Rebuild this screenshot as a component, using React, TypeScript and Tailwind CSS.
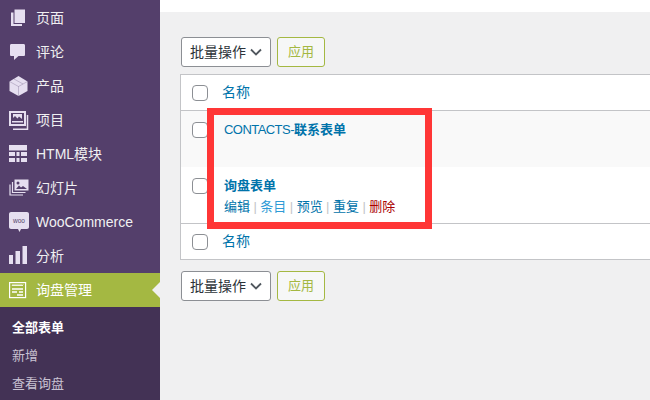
import type { ReactNode } from 'react';

const iconFill = '#e6dff0';
const sidebar = '#543f6b';

// menu icons, drawn after the wp dashicons
const PageIcon = () => (
    <svg width="20" height="20" viewBox="0 0 20 20" fill={iconFill}>
        <path d="M5.500 1.500h10.500v13.500H5.500z" />
        <path d="M2 4.500h2.500v11.500H13v2H2z" />
    </svg>
);
const CommentIcon = () => (
    <svg width="20" height="20" viewBox="0 0 20 20" fill={iconFill}>
        <path d="M2.500 2h12c1 0 1.500.6 1.500 1.500v9c0 1-.5 1.500-1.500 1.500H9.500L5 18v-4H2.500C1.500 14 1 13.500 1 12.500v-9C1 2.600 1.500 2 2.500 2z" />
    </svg>
);
const BoxIcon = () => (
    <svg width="20" height="20" viewBox="0 0 20 20" fill={iconFill}>
        <path d="M9.500 0l9 5.500v9.500l-9 5-9-5V5.500z" />
        <path d="M.5 5.500l9 5 9-5M9.500 10.500V20M5 3l9 5" fill="none" stroke={sidebar} strokeWidth=".6" strokeOpacity=".45" />
    </svg>
);
const PortfolioIcon = () => (
    <svg width="20" height="20" viewBox="0 0 20 20" fill="none" stroke={iconFill}>
        <rect x="1" y="2" width="15" height="13" strokeWidth="2" />
        <path d="M18.500 5v14.200H4" strokeWidth="1.500" />
        <path d="M4 4h9v5L10 6.500 8.500 8.500 6 6 4 8z" fill={iconFill} stroke="none" />
        <path d="M3 11h11v1.500H3z" fill={iconFill} stroke="none" />
    </svg>
);
const GridIcon = () => (
    <svg width="20" height="20" viewBox="0 0 20 20" fill={iconFill}>
        <path d="M0 1h18v5.500H0z" />
        <path d="M0 8h6v4H0zM7.500 8h3v4h-3zM12 8h6v4h-6zM0 14h6v4H0zM7.500 14h3v4h-3zM12 14h6v4h-6z" />
    </svg>
);
const SlidesIcon = () => (
    <svg width="20" height="20" viewBox="0 0 20 20" fill="none" stroke={iconFill} strokeWidth="1.200">
        <rect x="5.500" y="1.500" width="14" height="11" fill={iconFill} stroke="none" />
        <path d="M3.500 4v10.500h13M1 6.500v10.500h13" />
        <path d="M7 11l3-3.500 2 2 2-1.500 4 3z" fill={sidebar} stroke="none" />
        <circle cx="9" cy="5" r="1.500" fill={sidebar} stroke="none" />
    </svg>
);
const WooIcon = () => (
    <svg width="20" height="20" viewBox="0 0 20 20">
        <path d="M2 0h16c1 0 2 .8 2 2v13c0 1-1 2-2 2h-6l-1.500 3-1.500-3H2c-1 0-2-1-2-2V2C0 .8 1 0 2 0z" fill={iconFill} />
        <text x="10" y="10.500" textAnchor="middle" fontSize="6.500" fontFamily="'Liberation Sans', sans-serif" fill={sidebar}>woo</text>
    </svg>
);
const ChartIcon = () => (
    <svg width="20" height="20" viewBox="0 0 20 20" fill={iconFill}>
        <path d="M0 9h4v9H0zM6.500 5h4.500v13H6.500zM13.500 0H18v18h-4.500z" />
    </svg>
);
const FormIcon = () => (
    <svg width="20" height="20" viewBox="0 0 20 20" fill="none" stroke="#fff">
        <rect x=".6" y="2.600" width="16" height="15" strokeWidth="1.200" />
        <path d="M3 6l1-1.500L5 6l1-1.500L7 6l1-1.500L9 6l1-1.500L11 6l1-1.500L13 6l1-1.500" strokeWidth="1" />
        <path d="M3 9h11M3 12h5M10 12h4M8 15h6" strokeWidth="1.300" />
    </svg>
);

const menu: { label: string; icon: ReactNode }[] = [
    { label: '页面', icon: <PageIcon /> },
    { label: '评论', icon: <CommentIcon /> },
    { label: '产品', icon: <BoxIcon /> },
    { label: '项目', icon: <PortfolioIcon /> },
    { label: 'HTML模块', icon: <GridIcon /> },
    { label: '幻灯片', icon: <SlidesIcon /> },
    { label: 'WooCommerce', icon: <WooIcon /> },
    { label: '分析', icon: <ChartIcon /> },
];

function BulkBar() {
    return (
        <div className="flex items-center gap-[6px] pl-px">
            <div className="flex h-[30px] w-[90px] items-center justify-between rounded-[3px] border border-[#8c8f94] bg-white pl-2 pr-[8px] text-[14px] text-[#2c3338]">
                <span>批量操作</span>
                <svg width="12" height="8" viewBox="0 0 12 8" fill="none" stroke="#50575e" strokeWidth="1.800">
                    <path d="M1 1.500l5 5 5-5" />
                </svg>
            </div>
            <div className="flex h-[30px] w-[48px] items-center justify-center rounded-[3px] border border-[#a4b842] bg-[#f6f7f7] text-[13px] text-[#a4b842]">
                应用
            </div>
        </div>
    );
}

function Check() {
    return <div className="h-4 w-4 shrink-0 rounded-[4px] border border-[#8c8f94] bg-white" />;
}

function Sep() {
    return <span className="w-[10.300px] text-center text-[#c3c4c7]">|</span>;
}

export default function App() {
    return (
        <div className="flex h-[400px] w-[650px] overflow-hidden font-['Liberation_Sans','Noto_Sans_CJK_SC',sans-serif] text-[13px]">
            {/* Sidebar */}
            <div className="flex w-[160px] shrink-0 flex-col bg-[#543f6b] pt-px">
                {menu.map((m) => (
                    <div key={m.label} className="flex h-[34px] items-center text-[#f0f0f1]">
                        <div className="w-[36px] pl-[9px]">{m.icon}</div>
                        <span className="text-[14px]">{m.label}</span>
                    </div>
                ))}
                <div className="relative flex h-[34px] items-center bg-[#a4b842] text-white">
                    <div className="w-[36px] pl-[9px]"><FormIcon /></div>
                    <span className="text-[14px]">询盘管理</span>
                    <div className="absolute right-0 top-[9px] h-0 w-0 border-y-[8px] border-r-[8px] border-y-transparent border-r-[#f0f0f1]" />
                </div>
                <div className="flex flex-1 flex-col bg-[#433255] pl-3 pt-[7px] text-[#c9c2d2]">
                    <div className="flex h-[28px] items-center font-bold text-white">全部表单</div>
                    <div className="flex h-[28px] items-center">新增</div>
                    <div className="flex h-[28px] items-center">查看询盘</div>
                </div>
            </div>

            {/* Content */}
            <div className="relative flex flex-1 flex-col bg-[#f0f0f1]">
                <div className="h-3 bg-white" />
                <div className="flex flex-col pl-5 pt-[25px]">
                    <BulkBar />
                    <div className="mt-[7px] border-y border-l border-[#c3c4c7] bg-white">
                        <div className="flex h-[36px] items-center gap-[14px] border-b border-[#c3c4c7] pl-[11px] text-[14px] text-[#0073aa]">
                            <Check />
                            <span>名称</span>
                        </div>
                        <div className="flex h-[56px] items-start gap-[14px] bg-[#f9f9f9] pl-[11px] pt-[11px]">
                            <Check />
                            <span className="-mt-[2px] ml-[2px] text-[#0073aa]">
                                <span className="tracking-[-0.55px]">CONTACTS-</span>
                                <span className="font-semibold">联系表单</span>
                            </span>
                        </div>
                        <div className="flex h-[57px] items-start gap-[14px] border-b border-[#c3c4c7] pl-[11px] pt-[11px]">
                            <Check />
                            <div className="-mt-[2px] ml-[2px] flex flex-col">
                                <span className="font-semibold text-[#0073aa]">询盘表单</span>
                                <div className="mt-[1px] flex items-center text-[#0073aa]">
                                    <span>编辑</span>
                                    <Sep />
                                    <span className="text-[#2e9bd6]">条目</span>
                                    <Sep />
                                    <span>预览</span>
                                    <Sep />
                                    <span>重复</span>
                                    <Sep />
                                    <span className="text-[#a00]">删除</span>
                                </div>
                            </div>
                        </div>
                        <div className="flex h-[35px] items-center gap-[14px] pl-[11px] text-[14px] text-[#0073aa]">
                            <Check />
                            <span>名称</span>
                        </div>
                    </div>
                    <div className="mt-[11px]"><BulkBar /></div>
                </div>
                {/* red annotation box */}
                <div className="absolute left-[47px] top-[108px] h-[121px] w-[225px] border-[7px] border-[#ff3636]" />
            </div>
        </div>
    );
}
